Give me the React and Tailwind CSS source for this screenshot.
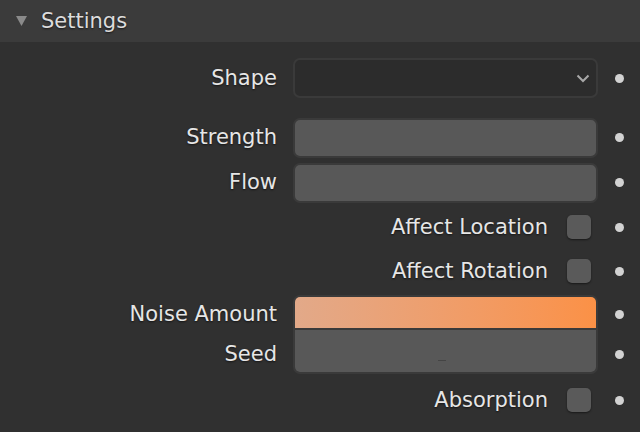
const font = { fontFamily: '"DejaVu Sans", sans-serif' }

function Dot() {
  return (
    <div className="w-[42px] flex justify-center shrink-0">
      <div className="w-[9px] h-[9px] rounded-full bg-[#d2d2d2]" />
    </div>
  )
}

function Label({ children }) {
  return (
    <div className="flex-1 text-right text-[21px] text-[#e6e6e6] [text-shadow:0_1px_2px_rgba(0,0,0,0.6)] pr-[16px] leading-none">
      {children}
    </div>
  )
}

function FieldRow({ label }) {
  return (
    <div className="flex items-center h-[45px]">
      <Label>{label}</Label>
      <div className="w-[305px] h-[40px] rounded-[7px] bg-[#585858] border-2 border-[#3a3a3a]" />
      <Dot />
    </div>
  )
}

function CheckRow({ label }) {
  return (
    <div className="flex items-center justify-end h-[44px]">
      <div className="text-[21px] text-[#e6e6e6] [text-shadow:0_1px_2px_rgba(0,0,0,0.6)] leading-none mr-[19px]">
        {label}
      </div>
      <div className="w-[24px] h-[24px] rounded-[5px] bg-[#5a5a5a] shadow-[0_1px_2px_rgba(0,0,0,0.5)] mr-[7px]" />
      <Dot />
    </div>
  )
}

export default function App() {
  return (
    <div className="w-[640px] h-[432px] bg-[#303030] overflow-hidden" style={font}>
      <div className="h-[42px] bg-[#3b3b3b] flex items-center">
        <svg width="11" height="10" viewBox="0 0 11 10" className="ml-[16px]">
          <polygon points="0,0 11,0 5.5,10" fill="#8a8a8a" />
        </svg>
        <span className="ml-[14px] text-[21px] text-[#dcdcdc] [text-shadow:0_1px_2px_rgba(0,0,0,0.6)] leading-none">
          Settings
        </span>
      </div>

      <div className="pt-[14px]">
        <div className="flex items-center h-[44px]">
          <Label>Shape</Label>
          <div className="w-[305px] h-[40px] rounded-[7px] bg-[#2c2c2c] border-2 border-[#3a3a3a] flex items-center justify-end pr-[6px]">
            <svg width="14" height="9" viewBox="0 0 14 9">
              <polyline points="1.5,1.5 7,7 12.5,1.5" fill="none" stroke="#a8a8a8" strokeWidth="2" />
            </svg>
          </div>
          <Dot />
        </div>

        <div className="h-[15px]" />
        <FieldRow label="Strength" />
        <FieldRow label="Flow" />
        <CheckRow label="Affect Location" />
        <CheckRow label="Affect Rotation" />

        <div className="flex items-center mt-[2px]">
          <div className="flex-1 flex flex-col">
            <div className="h-[39px] flex items-center"><Label>Noise Amount</Label></div>
            <div className="h-[40px] flex items-center"><Label>Seed</Label></div>
          </div>
          <div className="w-[305px] h-[79px] rounded-[7px] border-2 border-[#3a3a3a] overflow-hidden flex flex-col">
            <div className="flex-1 bg-gradient-to-r from-[#e2a989] to-[#fb9146]" />
            <div className="h-[2px] bg-[#3a3a3a]" />
            <div className="flex-1 bg-[#585858] flex justify-center items-end pb-[11px]">
              <div className="w-[8px] h-[1px] bg-[#444444] ml-[-8px]" />
            </div>
          </div>
          <div className="flex flex-col">
            <div className="h-[39px] flex items-center"><Dot /></div>
            <div className="h-[40px] flex items-center"><Dot /></div>
          </div>
        </div>

        <div className="mt-[4px]">
          <CheckRow label="Absorption" />
        </div>
      </div>
    </div>
  )
}
